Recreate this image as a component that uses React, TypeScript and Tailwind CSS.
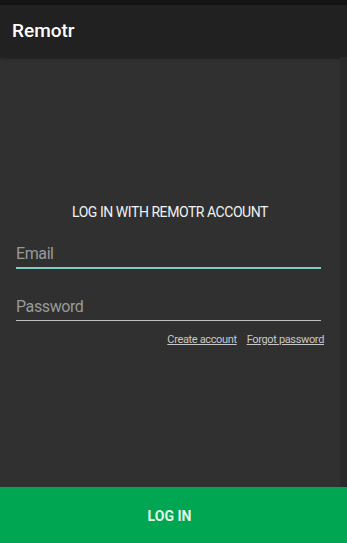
export default function App() {
  return (
    <div className="w-[347px] h-[543px] flex flex-col bg-[#303030] font-['Roboto',sans-serif] overflow-hidden">
      <div className="h-[5px] bg-[#141414]" />
      <header className="h-[52px] bg-[#212121] flex items-center px-3 shadow-[0_1px_3px_rgba(0,0,0,0.5)]">
        <h1 className="text-white text-[19px] font-medium">Remotr</h1>
      </header>
      <div className="flex-1 flex">
        <main className="flex-1 flex flex-col pt-[147px]">
          <p className="text-center text-[#f2f2f2] text-[14px] leading-4 tracking-[-0.45px] pl-[-2px]">LOG IN WITH REMOTR ACCOUNT</p>
          <div className="mt-[24px] px-4 pr-[19px]">
            <div className="text-[#9a9a9a] text-[16px] leading-5 tracking-[-0.4px] border-b-2 border-[#80cbc4] pb-[3px]">Email</div>
          </div>
          <div className="mt-[28px] px-4 pr-[19px]">
            <div className="text-[#9a9a9a] text-[16px] leading-5 tracking-[-0.4px] border-b border-[#bdbdbd] pb-[3px]">Password</div>
          </div>
          <div className="mt-[11px] flex justify-end gap-[10px] pr-[16px] text-[11px] tracking-[-0.35px] text-[#c8c8c8]">
            <a className="underline">Create account</a>
            <a className="underline">Forgot password</a>
          </div>
        </main>
        <div className="w-[7px] bg-[#2a2a2a]" />
      </div>
      <button className="h-[56px] bg-[#00a651] text-[#e3f5ea] text-[14px] font-bold pr-[8px] pt-[2px]">LOG IN</button>
    </div>
  );
}
